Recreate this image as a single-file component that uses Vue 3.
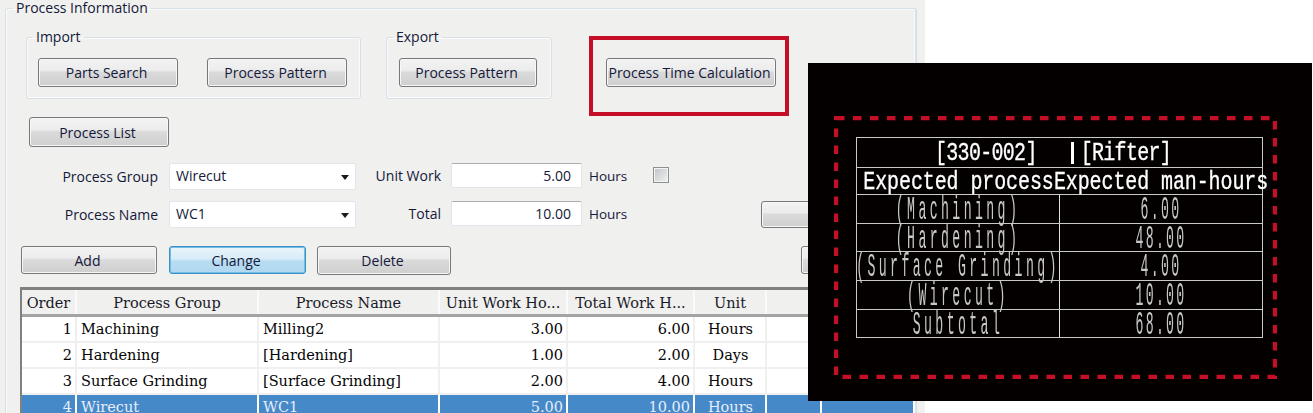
<script setup>
const rows = [
  { n: 1, g: 'Machining', p: 'Milling2', u: '3.00', t: '6.00', unit: 'Hours' },
  { n: 2, g: 'Hardening', p: '[Hardening]', u: '1.00', t: '2.00', unit: 'Days' },
  { n: 3, g: 'Surface Grinding', p: '[Surface Grinding]', u: '2.00', t: '4.00', unit: 'Hours' },
  { n: 4, g: 'Wirecut', p: 'WC1', u: '5.00', t: '10.00', unit: 'Hours', sel: true }
]
const cad = [
  ['(Machining)', '6.00'],
  ['(Hardening)', '48.00'],
  ['(Surface Grinding)', '4.00'],
  ['(Wirecut)', '10.00'],
  ['Subtotal', '68.00']
]
</script>

<template>
  <div class="page">
    <div class="panel">
      <fieldset class="group main">
        <legend>Process Information</legend>
        <div class="top-row">
          <fieldset class="group import">
            <legend>Import</legend>
            <button class="btn w140">Parts Search</button>
            <button class="btn w140">Process Pattern</button>
          </fieldset>
          <fieldset class="group export">
            <legend>Export</legend>
            <button class="btn w138">Process Pattern</button>
          </fieldset>
          <div class="redbox"><button class="btn calc">Process Time Calculation</button></div>
        </div>
        <button class="btn list">Process List</button>
        <div class="form-row r1">
          <span class="lab l1">Process Group</span>
          <div class="combo">Wirecut<i class="arrow"></i></div>
          <span class="lab l2">Unit Work</span>
          <div class="input">5.00</div>
          <span class="unit">Hours</span>
          <span class="check"></span>
        </div>
        <div class="form-row r2">
          <span class="lab l1">Process Name</span>
          <div class="combo">WC1<i class="arrow"></i></div>
          <span class="lab l2">Total</span>
          <div class="input">10.00</div>
          <span class="unit">Hours</span>
          <button class="btn side"></button>
        </div>
        <div class="actions">
          <button class="btn add">Add</button>
          <button class="btn change">Change</button>
          <button class="btn del">Delete</button>
          <button class="btn side2"></button>
        </div>
        <div class="tablewrap">
          <table class="grid">
            <colgroup>
              <col class="c1" /><col class="c2" /><col class="c3" /><col class="c4" />
              <col class="c5" /><col class="c6" /><col class="c7" /><col class="c8" />
            </colgroup>
            <thead>
              <tr>
                <th>Order</th><th>Process Group</th><th>Process Name</th><th>Unit Work Ho...</th>
                <th>Total Work H...</th><th>Unit</th><th></th><th></th>
              </tr>
            </thead>
            <tbody>
              <tr v-for="r in rows" :key="r.n" :class="{ sel: r.sel }">
                <td class="num">{{ r.n }}</td><td>{{ r.g }}</td><td>{{ r.p }}</td>
                <td class="num">{{ r.u }}</td><td class="num">{{ r.t }}</td><td class="ctr">{{ r.unit }}</td><td></td><td></td>
              </tr>
            </tbody>
          </table>
        </div>
      </fieldset>
    </div>

    <div class="cad">
      <svg class="dash" width="443" height="263" viewBox="0 0 443 263">
        <rect x="2" y="2" width="439" height="259" fill="none" stroke="#c40f26" stroke-width="4.4" stroke-dasharray="8.5 8.5" />
      </svg>
      <div class="sheet">
        <div class="row head">
          <span class="big title">[330-002]</span><i class="bar"></i><span class="big title2">[Rifter]</span>
        </div>
        <div class="row two hdr">
          <div class="cell"><span class="big low">Expected process</span></div>
          <div class="cell"><span class="big low">Expected man-hours</span></div>
        </div>
        <div v-for="c in cad" :key="c[0]" class="row two">
          <div class="cell div"><span class="thin">{{ c[0] }}</span></div>
          <div class="cell"><span class="thin num2">{{ c[1] }}</span></div>
        </div>
      </div>
    </div>
  </div>
</template>

<style>
html, body { margin: 0; background: #fff; }
</style>

<style scoped>
.page { position: relative; width: 1313px; height: 413px; overflow: hidden; background: #fff; font-family: "Open Sans", "Noto Sans", sans-serif; font-size: 14px; color: #14183a; }
.panel { width: 925px; height: 413px; background: #f0f0ee; padding: 0 8px 0 5px; box-sizing: border-box; overflow: hidden; }

.group { margin: 0; padding: 0; border: 1px solid #d7e0e6; border-radius: 3px; box-sizing: border-box; min-width: 0; box-shadow: inset 0 0 0 1px #fbfbfb; }
.group legend { padding: 0 3px; line-height: 16px; font-size: 14px; color: #14183a; }
.main { height: 420px; padding: 0 0 0 15px; position: relative; border-right-width: 2px; }
.main > legend { margin-left: -8px; }
.top-row { display: flex; align-items: flex-start; margin-top: 13px; margin-left: 5px; }
.import { width: 335px; height: 70px; padding: 13px 0 0 11px; display: flex; gap: 29px; position: relative; }
.import > legend { margin-left: -5px; }
.export > legend { margin-left: -6px; }
.export { width: 166px; height: 70px; margin-left: 25px; padding: 13px 0 0 12px; }
.redbox { width: 200px; height: 80px; box-sizing: border-box; margin-left: 37px; margin-top: 7px; border: 4px solid #c40f26; padding: 18px 0 0 13px; }

.btn { display: block; padding: 0 3px 0 0; height: 29px; box-sizing: border-box; border: 1px solid #77787a; border-radius: 3px; font: inherit; font-size: 14px; color: #14183a; background: linear-gradient(#f3f3f3 0%, #ececec 42%, #dadada 50%, #cfcfcf 100%); box-shadow: inset 0 0 0 1px #f7f7f7; }
.w140 { width: 140px; }
.w138 { width: 138px; }
.calc { width: 170px; }
.list { width: 140px; margin: 1px 0 0 8px; height: 30px; }

.form-row { display: flex; align-items: flex-start; height: 26px; position: relative; }
.r1 { margin-top: 16px; }
.r2 { margin-top: 12px; }
.lab { text-align: right; line-height: 27px; font-size: 14px; white-space: nowrap; }
.l1 { width: 137px; margin-right: 11px; }
.l2 { width: 85px; margin-right: 10px; line-height: 25px; }
.combo { position: relative; width: 187px; height: 27px; box-sizing: border-box; background: #fff; border: 1px solid #e0e6ea; border-radius: 2px; padding-left: 6px; line-height: 23px; font-size: 14px; }
.arrow { position: absolute; right: 6px; top: 11px; width: 0; height: 0; border-left: 4px solid transparent; border-right: 4px solid transparent; border-top: 5px solid #1a1a1a; }
.input { width: 131px; height: 25px; box-sizing: border-box; background: #fff; border: 1px solid #dfe4e8; border-top-color: #adadad; border-radius: 2px; text-align: right; padding-right: 10px; line-height: 23px; font-size: 14px; }
.unit { margin-left: 7px; line-height: 27px; font-size: 13.5px; }
.check { width: 16px; height: 16px; box-sizing: border-box; margin: 4px 0 0 26px; border: 1px solid #8e8f8f; background: linear-gradient(135deg, #bfc2c6, #f2f2f2); box-shadow: inset 0 0 0 1px #f4f4f4; }
.side { position: absolute; left: 740px; top: 0; width: 120px; height: 27px; }

.actions { display: flex; position: relative; margin: 19px 0 0 0; height: 28px; }
.add { width: 136px; height: 28px; }
.change { width: 137px; height: 28px; margin-left: 12px; border: 1px solid #3d8fc4; background: linear-gradient(#e9f4fb 0%, #d8ecf8 45%, #b7dcf2 55%, #b0d8f0 100%); box-shadow: inset 0 0 0 1px #71bfe6; }
.del { width: 134px; margin-left: 11px; }
.side2 { position: absolute; left: 780px; top: 0; width: 120px; height: 28px; }

.tablewrap { width: 895px; margin: 13px 0 0 -1px; border-left: 2px solid #808080; border-top: 3px solid #808080; box-sizing: border-box; background: #fff; }
.grid { border-collapse: collapse; table-layout: fixed; width: 892px; font-family: "DejaVu Serif", "Liberation Serif", serif; font-size: 14.5px; color: #050505; }
.c1 { width: 54px; }
.c2 { width: 182px; }
.c3 { width: 181px; }
.c4 { width: 128px; }
.c5 { width: 127px; }
.c6 { width: 72px; }
.c7 { width: 55px; }
.c8 { width: 93px; }
.grid th { height: 25px; padding: 3px 0 0; box-sizing: border-box; background: #f0f0ee; font-weight: 400; border-right: 2px solid #fafafa; border-bottom: 3px solid #a3a3a3; color: #1a1a2a; white-space: nowrap; overflow: hidden; }
.grid td { height: 24px; padding: 0 3px 0 4px; border-right: 2px solid #f0f0f0; border-bottom: 2px solid #f0f0f0; white-space: nowrap; overflow: hidden; background: #fff; }
.grid .num { text-align: right; }
.grid .ctr { text-align: center; }
.grid .sel td { background: #4689c8; color: #e6eefb; border-right-color: #fff; border-bottom-color: #4689c8; }

.cad { position: absolute; left: 808px; top: 63px; width: 504px; height: 338px; background: #040000; }
.dash { position: absolute; left: 26px; top: 53px; }
.sheet { position: absolute; left: 48px; top: 74px; width: 407px; display: grid; grid-template-rows: 30px 27px 29px 28px 29px 29px 28px; border: 1px solid #c9c9c9; border-bottom: none; box-sizing: border-box; color: #fff; font-family: "Liberation Mono", monospace; }
.row { box-sizing: border-box; border-bottom: 1px solid #c9c9c9; display: flex; align-items: center; white-space: nowrap; min-height: 0; }
.row.head { padding-left: 78px; }
.row.two { display: grid; grid-template-columns: 203px minmax(0, 1fr); grid-template-rows: minmax(0, 1fr); align-items: stretch; }
.cell { display: flex; justify-content: center; align-items: center; min-height: 0; box-sizing: border-box; }
.div { border-right: 1px solid #e0e0e0; }
.big { display: inline-block; font-size: 20px; line-height: 20px; letter-spacing: -0.1px; transform: scaleY(1.3); -webkit-text-stroke: 0.25px #fff; filter: grayscale(1); }
.big.low { transform: translateY(1.5px) scaleY(1.3); }
.title { letter-spacing: -0.7px; }
.title2 { letter-spacing: -0.7px; margin-left: 7px; }
.bar { width: 3px; height: 22px; background: #fff; margin-left: 34px; }
.thin { display: inline-block; font-size: 13.2px; line-height: 14px; letter-spacing: 3.4px; transform: translateY(2px) scaleY(2.5); color: #c8c8c8; filter: grayscale(1); }
.num2 { letter-spacing: 2.3px; }
</style>
